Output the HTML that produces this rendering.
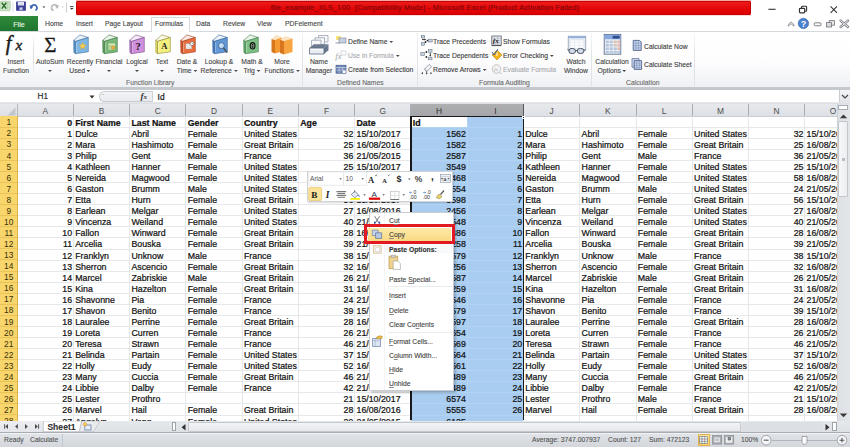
<!DOCTYPE html><html><head><meta charset="utf-8"><style>
*{margin:0;padding:0;box-sizing:border-box}
html,body{width:850px;height:447px;overflow:hidden;background:#fff;font-family:"Liberation Sans",sans-serif;}
.a{position:absolute}
.ui{position:absolute;font-size:6.8px;color:#454545;white-space:nowrap;line-height:1;-webkit-text-stroke:0.12px currentColor}
.c{position:absolute;font-size:8.8px;color:#111;white-space:nowrap;line-height:1;-webkit-text-stroke:0.22px #111}
.r{text-align:right}
.u2{font-size:7.2px;transform:scaleX(0.94);transform-origin:0 0}
.u2c{font-size:7.2px;transform:scaleX(0.94);transform-origin:50% 0}
.dd{display:inline-block;width:0;height:0;border-left:2px solid transparent;border-right:2px solid transparent;border-top:2.4px solid #4a4a4a;vertical-align:1px;margin-left:2px}
u{text-decoration-color:#8a8a8a;text-decoration-thickness:0.6px;text-underline-offset:0.8px}
.b{font-weight:bold}
.hl{position:absolute;left:17px;width:820px;height:1px;background:#e7e8ea}
.vl{position:absolute;top:116px;width:1px;background:#e6e7e9}
.ch{position:absolute;font-size:8.4px;color:#4a4a4a;text-align:center;line-height:1}
.rh{position:absolute;font-size:8.4px;color:#3a3208;text-align:center;line-height:1;width:17.5px;left:0}
</style></head><body>
<div class="a" style="left:0;top:0;width:850px;height:16px;background:#fff"></div>
<div class="a" style="left:75.5px;top:0;width:675.6px;height:15.6px;background:linear-gradient(#f7a0a0,#f5b0b0 6%,#fff0 8%,#fff0 92%,#fbd0d0 96%,#fff0)"></div>
<div class="a" style="left:75.8px;top:1px;width:675px;height:13.9px;background:linear-gradient(#ee1c1c,#e40808 50%,#dc0000);border:0.6px solid #c40000;border-radius:1px"></div>
<div class="ui" style="left:0;width:850px;top:4.4px;text-align:center;color:#7a0606;font-size:7.2px;letter-spacing:0.28px">file_example_XLS_100&nbsp; [Compatibility Mode] - Microsoft Excel (Product Activation Failed)</div>
<svg class="a" style="left:760px;top:0" width="90" height="32" viewBox="760 0 90 32"><path d="M768.4 9.3h7.2" stroke="#333" stroke-width="1.1"/><path d="M801.6 7.9 V6.9 a0.7 0.7 0 0 1 0.7 -0.7 h3.6 a0.7 0.7 0 0 1 0.7 0.7 v3.6 a0.7 0.7 0 0 1 -0.7 0.7 h-0.9" stroke="#333" stroke-width="1.1" fill="none"/><rect x="799.5" y="8.3" width="5.2" height="4.5" rx="0.8" fill="none" stroke="#333" stroke-width="1.2"/><path d="M830.6 6.4L837 12.8M837 6.4L830.6 12.8" stroke="#333" stroke-width="1.05"/><path d="M788.2 26.2 L788.2 24.6 L791.1 21.9 L794 24.6 L794 26.2 L791.1 23.8Z" fill="#f4f4f4" stroke="#7b7f85" stroke-width="0.8" stroke-linejoin="round"/><circle cx="803.4" cy="23.4" r="5.2" fill="#4a80cc" stroke="#2f5fa8" stroke-width="0.6"/><text x="803.4" y="26.7" font-size="9" font-weight="bold" fill="#fff" text-anchor="middle" font-family="Liberation Sans">?</text><rect x="814.2" y="22.8" width="6.8" height="3" rx="1" fill="#fafafa" stroke="#6f737a" stroke-width="0.9"/><rect x="829.2" y="20.6" width="5.2" height="4.6" fill="#e6e7e9" stroke="#6f737a" stroke-width="0.8"/><rect x="826.4" y="22.6" width="5" height="4.4" fill="#d8dadd" stroke="#6f737a" stroke-width="0.8"/><path d="M840.6 20.6 L848 27 M848 20.6 L840.6 27" stroke="#7b7f85" stroke-width="2.4" stroke-linecap="round"/><path d="M840.6 20.6 L848 27 M848 20.6 L840.6 27" stroke="#f4f4f4" stroke-width="1" stroke-linecap="round"/></svg>
<svg class="a" style="left:0;top:0" width="75" height="16"><rect x="0.3" y="1.2" width="10" height="9.6" rx="0.8" fill="#cfe8c8" stroke="#9fbf98" stroke-width="0.6"/><path d="M5 2.5h4.5M5 5h4.5M5 7.5h4.5M7.2 2v8" stroke="#a7c9a0" stroke-width="0.5"/><path d="M1.8 2.8L6.2 8.6M6.2 2.8L1.8 8.6" stroke="#2c6e2c" stroke-width="1.5"/><line x1="13" y1="2" x2="13" y2="12.5" stroke="#dcdcdc" stroke-width="0.8"/><rect x="16.1" y="1.4" width="9.8" height="9.4" rx="0.6" fill="#3a3f92"/><rect x="17.8" y="1.9" width="6.2" height="3.6" fill="#f0f2fa"/><path d="M18.3 3h5M18.3 4.3h5" stroke="#aab0d0" stroke-width="0.4"/><rect x="19" y="7.2" width="4" height="3.2" fill="#8b90c8"/><rect x="20.3" y="7.8" width="1.4" height="1.8" fill="#e8eaf6"/><path d="M31 8.5 A3 3 0 1 1 35.5 10.5" stroke="#3c64b4" stroke-width="1.6" fill="none"/><path d="M29.5 5.5 L31 9 L33.5 6.5Z" fill="#3c64b4"/><path d="M42.5 6.5l1.4 1.4 1.4-1.4z" fill="#333"/><path d="M53.5 10.5 A3 3 0 1 1 57.5 7.5" stroke="#b8b8b8" stroke-width="1.5" fill="none"/><path d="M59 5 L57.5 9 L55 6.5Z" fill="#b8b8b8"/><path d="M61.5 6.5l1.2 1.2 1.2-1.2z" fill="#bbb"/><line x1="66.5" y1="2.5" x2="66.5" y2="12.5" stroke="#cfcfcf"/><rect x="70" y="6.2" width="3.6" height="0.9" fill="#333"/><path d="M70 8l1.8 1.8 1.8-1.8z" fill="#333"/></svg>
<div class="a" style="left:0;top:16px;width:38.2px;height:15.5px;background:linear-gradient(#2f8a3a,#1e7430)"></div>
<div class="ui" style="left:0;width:38px;top:20.8px;text-align:center;color:#e9f5e6;font-size:7.2px">File</div>
<div class="a" style="left:0;top:31.2px;width:850px;height:1px;background:#d4d7db"></div>
<div class="a" style="left:150.5px;top:16.5px;width:39.8px;height:15.5px;background:#fff;border:1px solid #d4d7db;border-bottom:none"></div>
<div class="ui u2" style="left:44.8px;top:20.4px;color:#444">Home</div>
<div class="ui u2" style="left:75.6px;top:20.4px;color:#444">Insert</div>
<div class="ui u2" style="left:105.3px;top:20.4px;color:#444">Page Layout</div>
<div class="ui u2" style="left:154.8px;top:20.4px;color:#444">Formulas</div>
<div class="ui u2" style="left:196px;top:20.4px;color:#444">Data</div>
<div class="ui u2" style="left:223.1px;top:20.4px;color:#444">Review</div>
<div class="ui u2" style="left:257.4px;top:20.4px;color:#444">View</div>
<div class="ui u2" style="left:285px;top:20.4px;color:#444">PDFelement</div>
<div class="a" style="left:0;top:31.7px;width:850px;height:55.3px;background:linear-gradient(#ffffff 0%,#fdfdfe 55%,#eef0f3 100%)"></div>
<div class="a" style="left:32.7px;top:36px;width:1px;height:40px;background:linear-gradient(rgba(220,222,226,0),#dfe1e5 30%,#dfe1e5 70%,rgba(220,222,226,0))"></div>
<div class="a" style="left:301.8px;top:33px;width:1px;height:53px;background:linear-gradient(rgba(226,228,232,0.3),#e1e3e7 40%,#dfe2e6)"></div>
<div class="a" style="left:417.2px;top:33px;width:1px;height:53px;background:linear-gradient(rgba(226,228,232,0.3),#e1e3e7 40%,#dfe2e6)"></div>
<div class="a" style="left:591.3px;top:33px;width:1px;height:53px;background:linear-gradient(rgba(226,228,232,0.3),#e1e3e7 40%,#dfe2e6)"></div>
<div class="a" style="left:693.7px;top:33px;width:1px;height:53px;background:linear-gradient(rgba(226,228,232,0.3),#e1e3e7 40%,#dfe2e6)"></div>
<div class="a" style="left:0;top:86.9px;width:850px;height:3.2px;background:#c5c8cd"></div>
<div class="ui u2" style="left:125.9px;top:78.7px;color:#6b6b6b">Function Library</div>
<div class="ui u2" style="left:336.7px;top:78.7px;color:#6b6b6b">Defined Names</div>
<div class="ui u2" style="left:478.5px;top:78.7px;color:#6b6b6b">Formula Auditing</div>
<div class="ui u2" style="left:625.9px;top:78.7px;color:#6b6b6b">Calculation</div>
<div class="ui u2c" style="left:-23.7px;width:80px;top:58.2px;text-align:center">Insert</div>
<div class="ui u2c" style="left:-23.7px;width:80px;top:67.2px;text-align:center">Function</div>
<div class="ui u2c" style="left:10px;width:80px;top:58.2px;text-align:center">AutoSum</div>
<div class="a" style="left:48px;top:69.6px;width:0;height:0;border-left:2px solid transparent;border-right:2px solid transparent;border-top:2.4px solid #4a4a4a"></div>
<div class="ui u2c" style="left:39.7px;width:80px;top:58.2px;text-align:center">Recently</div>
<div class="ui u2c" style="left:39.7px;width:80px;top:67.2px;text-align:center">Used<span class="dd"></span></div>
<div class="ui u2c" style="left:69.4px;width:80px;top:58.2px;text-align:center">Financial</div>
<div class="a" style="left:107.4px;top:69.6px;width:0;height:0;border-left:2px solid transparent;border-right:2px solid transparent;border-top:2.4px solid #4a4a4a"></div>
<div class="ui u2c" style="left:96.5px;width:80px;top:58.2px;text-align:center">Logical</div>
<div class="a" style="left:134.5px;top:69.6px;width:0;height:0;border-left:2px solid transparent;border-right:2px solid transparent;border-top:2.4px solid #4a4a4a"></div>
<div class="ui u2c" style="left:121.5px;width:80px;top:58.2px;text-align:center">Text</div>
<div class="a" style="left:159.5px;top:69.6px;width:0;height:0;border-left:2px solid transparent;border-right:2px solid transparent;border-top:2.4px solid #4a4a4a"></div>
<div class="ui u2c" style="left:147.4px;width:80px;top:58.2px;text-align:center">Date &amp;</div>
<div class="ui u2c" style="left:147.4px;width:80px;top:67.2px;text-align:center">Time<span class="dd"></span></div>
<div class="ui u2c" style="left:179px;width:80px;top:58.2px;text-align:center">Lookup &amp;</div>
<div class="ui u2c" style="left:179px;width:80px;top:67.2px;text-align:center">Reference<span class="dd"></span></div>
<div class="ui u2c" style="left:211.5px;width:80px;top:58.2px;text-align:center">Math &amp;</div>
<div class="ui u2c" style="left:211.5px;width:80px;top:67.2px;text-align:center">Trig<span class="dd"></span></div>
<div class="ui u2c" style="left:241.8px;width:80px;top:58.2px;text-align:center">More</div>
<div class="ui u2c" style="left:241.8px;width:80px;top:67.2px;text-align:center">Functions<span class="dd"></span></div>
<div class="ui u2c" style="left:279px;width:80px;top:58.2px;text-align:center">Name</div>
<div class="ui u2c" style="left:279px;width:80px;top:67.2px;text-align:center">Manager</div>
<div class="ui u2c" style="left:536.2px;width:80px;top:58.2px;text-align:center">Watch</div>
<div class="ui u2c" style="left:536.2px;width:80px;top:67.2px;text-align:center">Window</div>
<div class="ui u2c" style="left:571.8px;width:80px;top:58.2px;text-align:center">Calculation</div>
<div class="ui u2c" style="left:571.8px;width:80px;top:67.2px;text-align:center">Options<span class="dd"></span></div>
<div class="ui u2" style="left:347.5px;top:37.5px;color:#3b3b3b">Define Name<span class="dd"></span></div>
<div class="ui u2" style="left:347.5px;top:51.699999999999996px;color:#a9abae">Use in Formula<span class="dd"></span></div>
<div class="ui u2" style="left:347.5px;top:66.0px;color:#3b3b3b">Create from Selection</div>
<div class="ui u2" style="left:433.2px;top:37.5px;color:#3b3b3b">Trace Precedents</div>
<div class="ui u2" style="left:433.2px;top:51.699999999999996px;color:#3b3b3b">Trace Dependents</div>
<div class="ui u2" style="left:433.2px;top:66.0px;color:#3b3b3b">Remove Arrows<span class="dd"></span></div>
<div class="ui u2" style="left:503px;top:37.5px;color:#3b3b3b">Show Formulas</div>
<div class="ui u2" style="left:503px;top:51.699999999999996px;color:#3b3b3b">Error Checking<span class="dd"></span></div>
<div class="ui u2" style="left:503px;top:66.0px;color:#a9abae">Evaluate Formula</div>
<div class="ui u2" style="left:643.8px;top:42.6px;color:#3b3b3b">Calculate Now</div>
<div class="ui u2" style="left:643.8px;top:60.6px;color:#3b3b3b">Calculate Sheet</div>
<svg class="a" style="left:0;top:30px" width="64" height="28" viewBox="0 30 64 28"><text x="5.8" y="50.4" font-size="20.5" font-style="italic" fill="#1a1a1a" font-family="Liberation Serif" stroke="#1a1a1a" stroke-width="0.45">f</text><text x="15.4" y="50.4" font-size="15" font-style="italic" fill="#1a1a1a" font-family="Liberation Serif" stroke="#1a1a1a" stroke-width="0.4">x</text><text x="44.2" y="51.6" font-size="21" fill="#1a1a1a" font-family="Liberation Serif" stroke="#1a1a1a" stroke-width="0.3">&#931;</text></svg>
<svg class="a" style="left:72.5px;top:34.3px" width="17" height="21" viewBox="0 0 17 21"><path d="M0.6 6.4 L6.9 0.9 L15.3 3.5 L2.5 7.4Z" fill="#eaf2fa" stroke="#3d6d9c" stroke-width="0.6" stroke-linejoin="round"/><path d="M0.6 6.4 L2.5 7.4 L2.5 19.7 L0.8 18.6Z" fill="#4f8cc6" stroke="#3d6d9c" stroke-width="0.4"/><path d="M2.5 7.4 L15.3 3.5 L15.3 17.8 L2.5 19.7Z" fill="#7db6e4" stroke="#3d6d9c" stroke-width="0.6" stroke-linejoin="round"/><path d="M3.6 8.2 V18.6" stroke="#ffffff" stroke-opacity="0.35" stroke-width="0.9"/><path d="M9.6 8.2l1.2 2.5 2.6.2-2 1.7.7 2.6-2.5-1.4-2.3 1.5.5-2.7-2-1.6 2.7-.3z" fill="#f6cd52" stroke="#c9962a" stroke-width="0.3"/></svg>
<svg class="a" style="left:101.5px;top:34.3px" width="17" height="21" viewBox="0 0 17 21"><path d="M0.6 6.4 L6.9 0.9 L15.3 3.5 L2.5 7.4Z" fill="#e6f3e6" stroke="#3f7040" stroke-width="0.6" stroke-linejoin="round"/><path d="M0.6 6.4 L2.5 7.4 L2.5 19.7 L0.8 18.6Z" fill="#5a9c5c" stroke="#3f7040" stroke-width="0.4"/><path d="M2.5 7.4 L15.3 3.5 L15.3 17.8 L2.5 19.7Z" fill="#79b97a" stroke="#3f7040" stroke-width="0.6" stroke-linejoin="round"/><path d="M3.6 8.2 V18.6" stroke="#ffffff" stroke-opacity="0.35" stroke-width="0.9"/><rect x="6" y="9" width="7.5" height="7" fill="#cfe8b8" stroke="#5a8c4a" stroke-width="0.4"/><path d="M6.5 12h3M6.5 14h2" stroke="#6a9a5a" stroke-width="0.6"/><circle cx="11.2" cy="13.6" r="1.9" fill="#e2b440" stroke="#9a7420" stroke-width="0.4"/></svg>
<svg class="a" style="left:128.5px;top:34.3px" width="17" height="21" viewBox="0 0 17 21"><path d="M0.6 6.4 L6.9 0.9 L15.3 3.5 L2.5 7.4Z" fill="#f5eaf8" stroke="#7a4a88" stroke-width="0.6" stroke-linejoin="round"/><path d="M0.6 6.4 L2.5 7.4 L2.5 19.7 L0.8 18.6Z" fill="#b070c0" stroke="#7a4a88" stroke-width="0.4"/><path d="M2.5 7.4 L15.3 3.5 L15.3 17.8 L2.5 19.7Z" fill="#cf8fdc" stroke="#7a4a88" stroke-width="0.6" stroke-linejoin="round"/><path d="M3.6 8.2 V18.6" stroke="#ffffff" stroke-opacity="0.35" stroke-width="0.9"/><text x="9.2" y="15.8" font-size="10.5" font-weight="bold" fill="#111" text-anchor="middle" font-family="Liberation Serif">?</text></svg>
<svg class="a" style="left:154.5px;top:34.3px" width="17" height="21" viewBox="0 0 17 21"><path d="M0.6 6.4 L6.9 0.9 L15.3 3.5 L2.5 7.4Z" fill="#fbfae6" stroke="#8f8a30" stroke-width="0.6" stroke-linejoin="round"/><path d="M0.6 6.4 L2.5 7.4 L2.5 19.7 L0.8 18.6Z" fill="#dcd35a" stroke="#8f8a30" stroke-width="0.4"/><path d="M2.5 7.4 L15.3 3.5 L15.3 17.8 L2.5 19.7Z" fill="#f4f07e" stroke="#8f8a30" stroke-width="0.6" stroke-linejoin="round"/><path d="M3.6 8.2 V18.6" stroke="#ffffff" stroke-opacity="0.35" stroke-width="0.9"/><text x="9.2" y="15.2" font-size="8.5" font-weight="bold" fill="#222" text-anchor="middle" font-family="Liberation Serif">A</text></svg>
<svg class="a" style="left:180.3px;top:34.3px" width="17" height="21" viewBox="0 0 17 21"><path d="M0.6 6.4 L6.9 0.9 L15.3 3.5 L2.5 7.4Z" fill="#fbe8e0" stroke="#9a3a18" stroke-width="0.6" stroke-linejoin="round"/><path d="M0.6 6.4 L2.5 7.4 L2.5 19.7 L0.8 18.6Z" fill="#d0542a" stroke="#9a3a18" stroke-width="0.4"/><path d="M2.5 7.4 L15.3 3.5 L15.3 17.8 L2.5 19.7Z" fill="#ec6c3c" stroke="#9a3a18" stroke-width="0.6" stroke-linejoin="round"/><path d="M3.6 8.2 V18.6" stroke="#ffffff" stroke-opacity="0.35" stroke-width="0.9"/><rect x="5.8" y="9.6" width="6" height="5.4" fill="#e8e8e8" stroke="#999" stroke-width="0.3"/><circle cx="12" cy="9.6" r="2" fill="#fff" stroke="#444" stroke-width="0.5"/><path d="M12 8.6v1h0.8" stroke="#444" stroke-width="0.4" fill="none"/></svg>
<svg class="a" style="left:211.5px;top:34.3px" width="17" height="21" viewBox="0 0 17 21"><path d="M0.6 6.4 L6.9 0.9 L15.3 3.5 L2.5 7.4Z" fill="#e8f0fa" stroke="#2f5a90" stroke-width="0.6" stroke-linejoin="round"/><path d="M0.6 6.4 L2.5 7.4 L2.5 19.7 L0.8 18.6Z" fill="#467cc0" stroke="#2f5a90" stroke-width="0.4"/><path d="M2.5 7.4 L15.3 3.5 L15.3 17.8 L2.5 19.7Z" fill="#6298d6" stroke="#2f5a90" stroke-width="0.6" stroke-linejoin="round"/><path d="M3.6 8.2 V18.6" stroke="#ffffff" stroke-opacity="0.35" stroke-width="0.9"/><circle cx="9.4" cy="11.6" r="3" fill="#c4dcf4" stroke="#2a4f80" stroke-width="0.7"/><path d="M11.4 14l3.8 4.6" stroke="#4a4a4a" stroke-width="1.2"/></svg>
<svg class="a" style="left:243.2px;top:34.3px" width="17" height="21" viewBox="0 0 17 21"><path d="M0.6 6.4 L6.9 0.9 L15.3 3.5 L2.5 7.4Z" fill="#e8f5ea" stroke="#3f7a46" stroke-width="0.6" stroke-linejoin="round"/><path d="M0.6 6.4 L2.5 7.4 L2.5 19.7 L0.8 18.6Z" fill="#5ca465" stroke="#3f7a46" stroke-width="0.4"/><path d="M2.5 7.4 L15.3 3.5 L15.3 17.8 L2.5 19.7Z" fill="#7cc083" stroke="#3f7a46" stroke-width="0.6" stroke-linejoin="round"/><path d="M3.6 8.2 V18.6" stroke="#ffffff" stroke-opacity="0.35" stroke-width="0.9"/><ellipse cx="9.6" cy="11.8" rx="3" ry="3.8" fill="#111"/><ellipse cx="9.6" cy="11.8" rx="1.4" ry="2.4" fill="none" stroke="#b8e2bc" stroke-width="0.6"/><path d="M8.2 11.8h2.8" stroke="#b8e2bc" stroke-width="0.6"/></svg>
<svg class="a" style="left:271px;top:34.3px" width="22" height="21" viewBox="0 0 22 21"><path d="M0.5 5 L5 1 L11 3 L6 6Z" fill="#fbe3c4"/><path d="M0.5 5 L4 6 L4 19.5 L0.5 18Z" fill="#d8761e"/><path d="M4 6 L11 3.5 L11 17.5 L4 19.5Z" fill="#f59a32"/><path d="M9 6 L14 2 L21.5 4 L14 7Z" fill="#fbe3c4"/><path d="M9 6 L13 7 L13 20.5 L9 19Z" fill="#d8761e"/><path d="M13 7 L21.5 4.5 L21.5 18 L13 20.5Z" fill="#f7a540"/></svg>
<svg class="a" style="left:305px;top:32px" width="30" height="25" viewBox="305 32 30 25"><path d="M318.5 35.5h9.5v6.5h-9.5z" fill="#f7f8fa" stroke="#8c96a3" stroke-width="0.7"/><path d="M315 37.8h9.5v6.5H315z" fill="#f7f8fa" stroke="#8c96a3" stroke-width="0.7"/><path d="M311.5 40.2h9.5v6.5h-9.5z" fill="#f7f8fa" stroke="#8c96a3" stroke-width="0.7"/><path d="M309.5 48 L313.8 44.2 L328.5 44.2 L324 48Z" fill="#6c7b8f"/><path d="M324 48 L328.5 44.2 L328.5 50.2 L324 54Z" fill="#66768c"/><path d="M309.5 48 H324 V54 H309.5Z" fill="#e9eef5" stroke="#5d6b7e" stroke-width="0.8"/><path d="M311 49.5h11.5" stroke="#ffffff" stroke-width="0.8"/></svg>
<svg class="a" style="left:335px;top:35px" width="12" height="40" viewBox="0 0 12 40"><rect x="1" y="1" width="5" height="4" fill="#f4e27a"/><rect x="4" y="3" width="7" height="5" fill="#c7cfe0" stroke="#68758c" stroke-width="0.5"/><path d="M0.5 8h4" stroke="#68758c" stroke-width="0.7"/><text x="0.3" y="24.2" font-size="8.5" font-style="italic" fill="#9fa3a8" font-family="Liberation Serif">fx</text><rect x="6" y="16" width="5" height="4" fill="none" stroke="#c0c4ca" stroke-width="0.6"/><rect x="1" y="30.2" width="10" height="8" fill="#6f88b6" stroke="#3d5588" stroke-width="0.6"/><path d="M1.3 32.6h9.4" stroke="#dfe6f2" stroke-width="0.7"/><path d="M1.3 35.2h9.4M4.3 32.6v5.4M7.6 32.6v5.4" stroke="#c9d4e8" stroke-width="0.6"/><rect x="8" y="35.6" width="2.6" height="2.4" fill="#fff"/></svg>
<svg class="a" style="left:417px;top:33px" width="17" height="44" viewBox="417 33 17 44"><rect x="421.3" y="35.4" width="3.4" height="2.6" fill="#c8d2e0" stroke="#6d7a8c" stroke-width="0.6"/><rect x="421.3" y="42.6" width="3.4" height="2.6" fill="#c8d2e0" stroke="#6d7a8c" stroke-width="0.6"/><rect x="428.6" y="39.2" width="3.6" height="2.8" fill="#c8d2e0" stroke="#6d7a8c" stroke-width="0.6"/><path d="M422 39.6h3.2" stroke="#222" stroke-width="0.9"/><path d="M424.6 38.6l1.4 1-1.4 1z" fill="#222"/><circle cx="425.6" cy="42" r="0.9" fill="#222"/><circle cx="427.4" cy="40.6" r="0.8" fill="#222"/><rect x="420.8" y="52.6" width="3.6" height="2.8" fill="#c8d2e0" stroke="#6d7a8c" stroke-width="0.6"/><rect x="428.6" y="49.6" width="3.4" height="2.6" fill="#c8d2e0" stroke="#6d7a8c" stroke-width="0.6"/><rect x="428.6" y="57.2" width="3.4" height="2.6" fill="#c8d2e0" stroke="#6d7a8c" stroke-width="0.6"/><circle cx="426.4" cy="52" r="0.9" fill="#222"/><circle cx="426.4" cy="57" r="0.9" fill="#222"/><path d="M430.3 53v2.6" stroke="#222" stroke-width="0.9"/><path d="M429.2 55.2h2.2l-1.1 1.4z" fill="#222"/><path d="M424.5 69.2 L429.2 64.4 L431.6 66.6 L426.9 71.4Z" fill="#f3f4f6" stroke="#7a828c" stroke-width="0.7"/><path d="M424.5 69.2 L426.9 71.4" stroke="#7a828c" stroke-width="0.7"/><path d="M421.2 73.2l1.8 -1.1v2.2z" fill="#333"/><path d="M432.2 73.2l-1.8 -1.1v2.2z" fill="#333"/><path d="M426.7 71.4v2.4" stroke="#333" stroke-width="0.8"/><path d="M425.7 73.2h2l-1 1.2z" fill="#333"/></svg>
<svg class="a" style="left:490.5px;top:35px" width="12" height="42" viewBox="0 0 12 42"><rect x="0.8" y="1" width="9.4" height="9.2" fill="#e9ecf1" stroke="#4a4f58" stroke-width="0.7"/><path d="M0.8 3.4h9.4M0.8 5.8h9.4M0.8 8.2h9.4M3.4 1v9.2M6.8 1v9.2" stroke="#9aa2ae" stroke-width="0.5"/><text x="1.8" y="8.2" font-size="7" font-weight="bold" font-style="italic" fill="#111" font-family="Liberation Serif">fx</text><path d="M0.8 10.6h9.4" stroke="#333" stroke-width="0.8"/><path d="M6 15l5 5-5 5-5-5z" fill="#f2b418" stroke="#b07a08" stroke-width="0.5"/><path d="M6 17.5v3.5" stroke="#fff" stroke-width="1"/><path d="M1 17l2 3 4-6" stroke="#3a5a9c" stroke-width="1" fill="none"/><circle cx="5.5" cy="34" r="4.3" fill="#f1f1f1" stroke="#bbb" stroke-width="0.8"/><text x="3" y="36" font-size="5" font-style="italic" fill="#aaa" font-family="Liberation Serif">fx</text><path d="M8.5 37l2 2" stroke="#bbb" stroke-width="1"/></svg>
<svg class="a" style="left:566px;top:35px" width="22" height="21" viewBox="566 35 22 21"><rect x="568.2" y="36.2" width="17.6" height="14.2" fill="#f2f4f8" stroke="#7f8fa6" stroke-width="0.7"/><rect x="568.4" y="36.4" width="17.2" height="1.8" fill="#8eaedc"/><path d="M569.8 39.8h14.2v8.6h-14.2z" fill="#fbfcfd" stroke="#c3ccd8" stroke-width="0.5"/><path d="M569.8 42.6h14.2M569.8 45.4h14.2M574.5 39.8v8.6M579.2 39.8v8.6" stroke="#dfe4eb" stroke-width="0.5"/><ellipse cx="572.2" cy="51" rx="3.4" ry="2.6" fill="#d3dce8" stroke="#4b5566" stroke-width="1"/><ellipse cx="580.6" cy="51" rx="3.4" ry="2.6" fill="#d3dce8" stroke="#4b5566" stroke-width="1"/><path d="M575.6 50.6h1.6M568.8 50.4l-1.4 -1.2M584 50.4l1.4 -1.2" stroke="#4b5566" stroke-width="0.9"/></svg>
<svg class="a" style="left:602px;top:33px" width="21" height="23" viewBox="602 33 21 23"><rect x="604.2" y="34.4" width="16.6" height="19.8" fill="#eef2f8" stroke="#5f7090" stroke-width="0.9"/><rect x="604.7" y="34.9" width="15.6" height="4.4" fill="#86a8dc"/><rect x="612.6" y="35.8" width="7" height="2.8" fill="#2f4f92"/><g fill="#b6c6dc"><rect x="605.6" y="40.6" width="3.2" height="2.6"/><rect x="609.6" y="40.6" width="3.2" height="2.6"/><rect x="613.6" y="40.6" width="3.2" height="2.6" fill="#d9c4b6"/><rect x="617.4" y="40.6" width="2.8" height="2.6" fill="#e3b8b0"/><rect x="605.6" y="44" width="3.2" height="2.6"/><rect x="609.6" y="44" width="3.2" height="2.6"/><rect x="613.6" y="44" width="3.2" height="2.6" fill="#d9c4b6"/><rect x="617.4" y="44" width="2.8" height="2.6" fill="#e3b8b0"/><rect x="605.6" y="47.4" width="3.2" height="2.6"/><rect x="609.6" y="47.4" width="3.2" height="2.6"/><rect x="613.6" y="47.4" width="3.2" height="2.6"/><rect x="617.4" y="47.4" width="2.8" height="2.6" fill="#e3b8b0"/><rect x="605.6" y="50.8" width="3.2" height="2.4"/><rect x="609.6" y="50.8" width="3.2" height="2.4"/><rect x="613.6" y="50.8" width="3.2" height="2.4"/><rect x="617.4" y="50.8" width="2.8" height="2.4"/></g></svg>
<svg class="a" style="left:631px;top:38px" width="13" height="33" viewBox="631 38 13 33"><path d="M633.2 40.4h6.4l1.6 1.6v8.4h-8z" fill="#c9d5ea" stroke="#3f5486" stroke-width="0.8"/><path d="M633.2 43.2h8M633.2 45.6h8M633.2 48h8M635.8 41v9.4M638.4 41v9.4" stroke="#6f84b2" stroke-width="0.5"/><path d="M632 58.6h7v8.6h-7z" fill="#d4ddee" stroke="#4a5f90" stroke-width="0.7"/><path d="M634.2 60.6h7.4v8.8h-7.4z" fill="#c9d5ea" stroke="#3f5486" stroke-width="0.8"/><path d="M634.2 63h7.4M634.2 65.3h7.4M634.2 67.6h7.4M636.7 60.6v8.8M639.2 60.6v8.8" stroke="#6f84b2" stroke-width="0.5"/></svg>
<div class="a" style="left:0;top:90.1px;width:850px;height:12.4px;background:#fff"></div>
<div class="a" style="left:0;top:102px;width:850px;height:2.3px;background:linear-gradient(#e8eaed,#d9dce0)"></div>
<div class="ui" style="left:37.6px;top:93px;font-size:8.2px;color:#222">H1</div>
<svg class="a" style="left:89px;top:94.5px" width="6" height="4"><path d="M0.5 0.5h5l-2.5 3z" fill="#333"/></svg>
<div class="a" style="left:98.8px;top:90.8px;width:53px;height:11px;border:1px solid #c9ccd1;border-right:none;border-radius:6px 0 0 6px;background:linear-gradient(#f2f3f5,#e9ebee)"></div>
<div class="a" style="left:101.5px;top:92px;font-size:5px;color:#aaa;line-height:1">~</div>
<div class="a" style="left:140.5px;top:92px;font-family:'Liberation Serif',serif;font-style:italic;font-weight:bold;font-size:9px;color:#333;line-height:1">f<span style="font-size:7px">x</span></div>
<div class="a" style="left:151.8px;top:90.8px;width:1px;height:11px;background:#d0d3d8"></div>
<div class="c" style="left:157.6px;top:93.3px;font-size:8.4px;color:#222">Id</div>
<div class="a" style="left:838.8px;top:90.3px;width:11.2px;height:12.2px;background:linear-gradient(#f4f5f7,#e2e4e8);border-left:1px solid #c9ccd1"></div>
<svg class="a" style="left:840.5px;top:94px" width="8" height="5"><path d="M1 1l3 3 3-3" stroke="#444" stroke-width="1.2" fill="none"/></svg>
<div class="a" style="left:0;top:104.2px;width:837px;height:12px;background:linear-gradient(#e7e9ed,#dde0e5)"></div>
<div class="a" style="left:0;top:104.2px;width:17.7px;height:12px;background:linear-gradient(#e7e9ed,#dde0e5);border-right:1px solid #b5b9bf"></div>
<svg class="a" style="left:7px;top:106.5px" width="9" height="9"><path d="M8.5 0.5V8.5H0.5Z" fill="#c3c7cc"/></svg>
<div class="a" style="left:72.9px;top:104.2px;width:1px;height:12px;background:#a9adb3"></div>
<div class="ch" style="left:17.14px;top:106.5px;width:56.26px;color:#4d4d4d">A</div>
<div class="a" style="left:129.16px;top:104.2px;width:1px;height:12px;background:#a9adb3"></div>
<div class="ch" style="left:73.4px;top:106.5px;width:56.26px;color:#4d4d4d">B</div>
<div class="a" style="left:185.42px;top:104.2px;width:1px;height:12px;background:#a9adb3"></div>
<div class="ch" style="left:129.66px;top:106.5px;width:56.26px;color:#4d4d4d">C</div>
<div class="a" style="left:241.68px;top:104.2px;width:1px;height:12px;background:#a9adb3"></div>
<div class="ch" style="left:185.92000000000002px;top:106.5px;width:56.26px;color:#4d4d4d">D</div>
<div class="a" style="left:297.94px;top:104.2px;width:1px;height:12px;background:#a9adb3"></div>
<div class="ch" style="left:242.18px;top:106.5px;width:56.26px;color:#4d4d4d">E</div>
<div class="a" style="left:354.2px;top:104.2px;width:1px;height:12px;background:#a9adb3"></div>
<div class="ch" style="left:298.44px;top:106.5px;width:56.26px;color:#4d4d4d">F</div>
<div class="a" style="left:410.46px;top:104.2px;width:1px;height:12px;background:#a9adb3"></div>
<div class="ch" style="left:354.7px;top:106.5px;width:56.26px;color:#4d4d4d">G</div>
<div class="a" style="left:410.96px;top:104.2px;width:56.26px;height:12px;background:linear-gradient(#aeafb1,#a4a6a9)"></div>
<div class="a" style="left:466.71999999999997px;top:104.2px;width:1px;height:12px;background:#55585c"></div>
<div class="ch" style="left:410.96px;top:106.5px;width:56.26px;color:#303030">H</div>
<div class="a" style="left:467.21999999999997px;top:104.2px;width:56.26px;height:12px;background:linear-gradient(#aeafb1,#a4a6a9)"></div>
<div class="a" style="left:522.98px;top:104.2px;width:1px;height:12px;background:#55585c"></div>
<div class="ch" style="left:467.21999999999997px;top:106.5px;width:56.26px;color:#303030">I</div>
<div class="a" style="left:579.24px;top:104.2px;width:1px;height:12px;background:#a9adb3"></div>
<div class="ch" style="left:523.48px;top:106.5px;width:56.26px;color:#4d4d4d">J</div>
<div class="a" style="left:635.5px;top:104.2px;width:1px;height:12px;background:#a9adb3"></div>
<div class="ch" style="left:579.74px;top:106.5px;width:56.26px;color:#4d4d4d">K</div>
<div class="a" style="left:691.76px;top:104.2px;width:1px;height:12px;background:#a9adb3"></div>
<div class="ch" style="left:636.0px;top:106.5px;width:56.26px;color:#4d4d4d">L</div>
<div class="a" style="left:748.02px;top:104.2px;width:1px;height:12px;background:#a9adb3"></div>
<div class="ch" style="left:692.26px;top:106.5px;width:56.26px;color:#4d4d4d">M</div>
<div class="a" style="left:804.28px;top:104.2px;width:1px;height:12px;background:#a9adb3"></div>
<div class="ch" style="left:748.52px;top:106.5px;width:56.26px;color:#4d4d4d">N</div>
<div class="a" style="left:860.54px;top:104.2px;width:1px;height:12px;background:#a9adb3"></div>
<div class="ch" style="left:804.78px;top:106.5px;width:56.26px;color:#4d4d4d">O</div>
<div class="a" style="left:17.14px;top:115.7px;width:820px;height:0.8px;background:#c9ccd1"></div>
<div class="hl" style="top:126.77px"></div>
<div class="hl" style="top:137.83px"></div>
<div class="hl" style="top:148.90px"></div>
<div class="hl" style="top:159.97px"></div>
<div class="hl" style="top:171.03px"></div>
<div class="hl" style="top:182.10px"></div>
<div class="hl" style="top:193.17px"></div>
<div class="hl" style="top:204.24px"></div>
<div class="hl" style="top:215.30px"></div>
<div class="hl" style="top:226.37px"></div>
<div class="hl" style="top:237.44px"></div>
<div class="hl" style="top:248.50px"></div>
<div class="hl" style="top:259.57px"></div>
<div class="hl" style="top:270.64px"></div>
<div class="hl" style="top:281.70px"></div>
<div class="hl" style="top:292.77px"></div>
<div class="hl" style="top:303.84px"></div>
<div class="hl" style="top:314.91px"></div>
<div class="hl" style="top:325.97px"></div>
<div class="hl" style="top:337.04px"></div>
<div class="hl" style="top:348.11px"></div>
<div class="hl" style="top:359.17px"></div>
<div class="hl" style="top:370.24px"></div>
<div class="hl" style="top:381.31px"></div>
<div class="hl" style="top:392.38px"></div>
<div class="hl" style="top:403.44px"></div>
<div class="hl" style="top:414.51px"></div>
<div class="vl" style="left:72.90px;height:304.6px"></div>
<div class="vl" style="left:129.16px;height:304.6px"></div>
<div class="vl" style="left:185.42px;height:304.6px"></div>
<div class="vl" style="left:241.68px;height:304.6px"></div>
<div class="vl" style="left:297.94px;height:304.6px"></div>
<div class="vl" style="left:354.20px;height:304.6px"></div>
<div class="vl" style="left:410.46px;height:304.6px"></div>
<div class="vl" style="left:466.72px;height:304.6px"></div>
<div class="vl" style="left:522.98px;height:304.6px"></div>
<div class="vl" style="left:579.24px;height:304.6px"></div>
<div class="vl" style="left:635.50px;height:304.6px"></div>
<div class="vl" style="left:691.76px;height:304.6px"></div>
<div class="vl" style="left:748.02px;height:304.6px"></div>
<div class="vl" style="left:804.28px;height:304.6px"></div>
<div class="a" style="left:410.96px;top:116.2px;width:112.52px;height:304.6px;background:#a8cdf1"></div>
<div class="a" style="left:410.96px;top:126.77px;width:112.52px;height:1px;background:#b2d3f2"></div>
<div class="a" style="left:410.96px;top:137.83px;width:112.52px;height:1px;background:#b2d3f2"></div>
<div class="a" style="left:410.96px;top:148.90px;width:112.52px;height:1px;background:#b2d3f2"></div>
<div class="a" style="left:410.96px;top:159.97px;width:112.52px;height:1px;background:#b2d3f2"></div>
<div class="a" style="left:410.96px;top:171.03px;width:112.52px;height:1px;background:#b2d3f2"></div>
<div class="a" style="left:410.96px;top:182.10px;width:112.52px;height:1px;background:#b2d3f2"></div>
<div class="a" style="left:410.96px;top:193.17px;width:112.52px;height:1px;background:#b2d3f2"></div>
<div class="a" style="left:410.96px;top:204.24px;width:112.52px;height:1px;background:#b2d3f2"></div>
<div class="a" style="left:410.96px;top:215.30px;width:112.52px;height:1px;background:#b2d3f2"></div>
<div class="a" style="left:410.96px;top:226.37px;width:112.52px;height:1px;background:#b2d3f2"></div>
<div class="a" style="left:410.96px;top:237.44px;width:112.52px;height:1px;background:#b2d3f2"></div>
<div class="a" style="left:410.96px;top:248.50px;width:112.52px;height:1px;background:#b2d3f2"></div>
<div class="a" style="left:410.96px;top:259.57px;width:112.52px;height:1px;background:#b2d3f2"></div>
<div class="a" style="left:410.96px;top:270.64px;width:112.52px;height:1px;background:#b2d3f2"></div>
<div class="a" style="left:410.96px;top:281.70px;width:112.52px;height:1px;background:#b2d3f2"></div>
<div class="a" style="left:410.96px;top:292.77px;width:112.52px;height:1px;background:#b2d3f2"></div>
<div class="a" style="left:410.96px;top:303.84px;width:112.52px;height:1px;background:#b2d3f2"></div>
<div class="a" style="left:410.96px;top:314.91px;width:112.52px;height:1px;background:#b2d3f2"></div>
<div class="a" style="left:410.96px;top:325.97px;width:112.52px;height:1px;background:#b2d3f2"></div>
<div class="a" style="left:410.96px;top:337.04px;width:112.52px;height:1px;background:#b2d3f2"></div>
<div class="a" style="left:410.96px;top:348.11px;width:112.52px;height:1px;background:#b2d3f2"></div>
<div class="a" style="left:410.96px;top:359.17px;width:112.52px;height:1px;background:#b2d3f2"></div>
<div class="a" style="left:410.96px;top:370.24px;width:112.52px;height:1px;background:#b2d3f2"></div>
<div class="a" style="left:410.96px;top:381.31px;width:112.52px;height:1px;background:#b2d3f2"></div>
<div class="a" style="left:410.96px;top:392.38px;width:112.52px;height:1px;background:#b2d3f2"></div>
<div class="a" style="left:410.96px;top:403.44px;width:112.52px;height:1px;background:#b2d3f2"></div>
<div class="a" style="left:410.96px;top:414.51px;width:112.52px;height:1px;background:#b2d3f2"></div>
<div class="a" style="left:466.72px;top:116.2px;width:1px;height:304.6px;background:#b2d3f2"></div>
<div class="a" style="left:412.35999999999996px;top:117.0px;width:54.86px;height:10.467px;background:#fff"></div>
<div class="a" style="left:0;top:116.2px;width:17.7px;height:304.6px;background:#f8d66c;border-right:1px solid #dcb04a"></div>
<div class="a" style="left:0;top:126.67px;width:17px;height:0.8px;background:#e9c25a"></div>
<div class="rh" style="top:118.30px">1</div>
<div class="a" style="left:0;top:137.73px;width:17px;height:0.8px;background:#e9c25a"></div>
<div class="rh" style="top:129.37px">2</div>
<div class="a" style="left:0;top:148.80px;width:17px;height:0.8px;background:#e9c25a"></div>
<div class="rh" style="top:140.43px">3</div>
<div class="a" style="left:0;top:159.87px;width:17px;height:0.8px;background:#e9c25a"></div>
<div class="rh" style="top:151.50px">4</div>
<div class="a" style="left:0;top:170.94px;width:17px;height:0.8px;background:#e9c25a"></div>
<div class="rh" style="top:162.57px">5</div>
<div class="a" style="left:0;top:182.00px;width:17px;height:0.8px;background:#e9c25a"></div>
<div class="rh" style="top:173.63px">6</div>
<div class="a" style="left:0;top:193.07px;width:17px;height:0.8px;background:#e9c25a"></div>
<div class="rh" style="top:184.70px">7</div>
<div class="a" style="left:0;top:204.14px;width:17px;height:0.8px;background:#e9c25a"></div>
<div class="rh" style="top:195.77px">8</div>
<div class="a" style="left:0;top:215.20px;width:17px;height:0.8px;background:#e9c25a"></div>
<div class="rh" style="top:206.84px">9</div>
<div class="a" style="left:0;top:226.27px;width:17px;height:0.8px;background:#e9c25a"></div>
<div class="rh" style="top:217.90px">10</div>
<div class="a" style="left:0;top:237.34px;width:17px;height:0.8px;background:#e9c25a"></div>
<div class="rh" style="top:228.97px">11</div>
<div class="a" style="left:0;top:248.40px;width:17px;height:0.8px;background:#e9c25a"></div>
<div class="rh" style="top:240.04px">12</div>
<div class="a" style="left:0;top:259.47px;width:17px;height:0.8px;background:#e9c25a"></div>
<div class="rh" style="top:251.10px">13</div>
<div class="a" style="left:0;top:270.54px;width:17px;height:0.8px;background:#e9c25a"></div>
<div class="rh" style="top:262.17px">14</div>
<div class="a" style="left:0;top:281.60px;width:17px;height:0.8px;background:#e9c25a"></div>
<div class="rh" style="top:273.24px">15</div>
<div class="a" style="left:0;top:292.67px;width:17px;height:0.8px;background:#e9c25a"></div>
<div class="rh" style="top:284.31px">16</div>
<div class="a" style="left:0;top:303.74px;width:17px;height:0.8px;background:#e9c25a"></div>
<div class="rh" style="top:295.37px">17</div>
<div class="a" style="left:0;top:314.81px;width:17px;height:0.8px;background:#e9c25a"></div>
<div class="rh" style="top:306.44px">18</div>
<div class="a" style="left:0;top:325.87px;width:17px;height:0.8px;background:#e9c25a"></div>
<div class="rh" style="top:317.51px">19</div>
<div class="a" style="left:0;top:336.94px;width:17px;height:0.8px;background:#e9c25a"></div>
<div class="rh" style="top:328.57px">20</div>
<div class="a" style="left:0;top:348.01px;width:17px;height:0.8px;background:#e9c25a"></div>
<div class="rh" style="top:339.64px">21</div>
<div class="a" style="left:0;top:359.07px;width:17px;height:0.8px;background:#e9c25a"></div>
<div class="rh" style="top:350.71px">22</div>
<div class="a" style="left:0;top:370.14px;width:17px;height:0.8px;background:#e9c25a"></div>
<div class="rh" style="top:361.77px">23</div>
<div class="a" style="left:0;top:381.21px;width:17px;height:0.8px;background:#e9c25a"></div>
<div class="rh" style="top:372.84px">24</div>
<div class="a" style="left:0;top:392.27px;width:17px;height:0.8px;background:#e9c25a"></div>
<div class="rh" style="top:383.91px">25</div>
<div class="a" style="left:0;top:403.34px;width:17px;height:0.8px;background:#e9c25a"></div>
<div class="rh" style="top:394.98px">26</div>
<div class="a" style="left:0;top:414.41px;width:17px;height:0.8px;background:#e9c25a"></div>
<div class="rh" style="top:406.04px">27</div>
<div class="a" style="left:0;top:425.48px;width:17px;height:0.8px;background:#e9c25a"></div>
<div class="rh" style="top:417.11px">28</div>
<div class="c r b" style="left:17.14px;width:54.96px;top:118.70px">0</div>
<div class="c b" style="left:75.2px;top:118.70px">First Name</div>
<div class="c b" style="left:131.46px;top:118.70px">Last Name</div>
<div class="c b" style="left:187.72000000000003px;top:118.70px">Gender</div>
<div class="c b" style="left:243.98000000000002px;top:118.70px">Country</div>
<div class="c b" style="left:300.24px;top:118.70px">Age</div>
<div class="c b" style="left:356.5px;top:118.70px">Date</div>
<div class="c b" style="left:412.76px;top:118.70px">Id</div>
<div class="c r" style="left:17.14px;width:54.96px;top:129.77px">1</div>
<div class="c" style="left:75.2px;top:129.77px">Dulce</div>
<div class="c" style="left:131.46px;top:129.77px">Abril</div>
<div class="c" style="left:187.72000000000003px;top:129.77px">Female</div>
<div class="c" style="left:243.98000000000002px;top:129.77px">United States</div>
<div class="c r" style="left:298.44px;width:54.96px;top:129.77px">32</div>
<div class="c" style="left:356.5px;top:129.77px">15/10/2017</div>
<div class="c r" style="left:410.96px;width:54.96px;top:129.77px">1562</div>
<div class="c r" style="left:467.21999999999997px;width:54.96px;top:129.77px">1</div>
<div class="c" style="left:525.28px;top:129.77px">Dulce</div>
<div class="c" style="left:581.54px;top:129.77px">Abril</div>
<div class="c" style="left:637.8px;top:129.77px">Female</div>
<div class="c" style="left:694.06px;top:129.77px">United States</div>
<div class="c r" style="left:748.52px;width:54.96px;top:129.77px">32</div>
<div class="c" style="left:806.5799999999999px;top:129.77px">15/10/2017</div>
<div class="c r" style="left:17.14px;width:54.96px;top:140.83px">2</div>
<div class="c" style="left:75.2px;top:140.83px">Mara</div>
<div class="c" style="left:131.46px;top:140.83px">Hashimoto</div>
<div class="c" style="left:187.72000000000003px;top:140.83px">Female</div>
<div class="c" style="left:243.98000000000002px;top:140.83px">Great Britain</div>
<div class="c r" style="left:298.44px;width:54.96px;top:140.83px">25</div>
<div class="c" style="left:356.5px;top:140.83px">16/08/2016</div>
<div class="c r" style="left:410.96px;width:54.96px;top:140.83px">1582</div>
<div class="c r" style="left:467.21999999999997px;width:54.96px;top:140.83px">2</div>
<div class="c" style="left:525.28px;top:140.83px">Mara</div>
<div class="c" style="left:581.54px;top:140.83px">Hashimoto</div>
<div class="c" style="left:637.8px;top:140.83px">Female</div>
<div class="c" style="left:694.06px;top:140.83px">Great Britain</div>
<div class="c r" style="left:748.52px;width:54.96px;top:140.83px">25</div>
<div class="c" style="left:806.5799999999999px;top:140.83px">16/08/2016</div>
<div class="c r" style="left:17.14px;width:54.96px;top:151.90px">3</div>
<div class="c" style="left:75.2px;top:151.90px">Philip</div>
<div class="c" style="left:131.46px;top:151.90px">Gent</div>
<div class="c" style="left:187.72000000000003px;top:151.90px">Male</div>
<div class="c" style="left:243.98000000000002px;top:151.90px">France</div>
<div class="c r" style="left:298.44px;width:54.96px;top:151.90px">36</div>
<div class="c" style="left:356.5px;top:151.90px">21/05/2015</div>
<div class="c r" style="left:410.96px;width:54.96px;top:151.90px">2587</div>
<div class="c r" style="left:467.21999999999997px;width:54.96px;top:151.90px">3</div>
<div class="c" style="left:525.28px;top:151.90px">Philip</div>
<div class="c" style="left:581.54px;top:151.90px">Gent</div>
<div class="c" style="left:637.8px;top:151.90px">Male</div>
<div class="c" style="left:694.06px;top:151.90px">France</div>
<div class="c r" style="left:748.52px;width:54.96px;top:151.90px">36</div>
<div class="c" style="left:806.5799999999999px;top:151.90px">21/05/2015</div>
<div class="c r" style="left:17.14px;width:54.96px;top:162.97px">4</div>
<div class="c" style="left:75.2px;top:162.97px">Kathleen</div>
<div class="c" style="left:131.46px;top:162.97px">Hanner</div>
<div class="c" style="left:187.72000000000003px;top:162.97px">Female</div>
<div class="c" style="left:243.98000000000002px;top:162.97px">United States</div>
<div class="c r" style="left:298.44px;width:54.96px;top:162.97px">25</div>
<div class="c" style="left:356.5px;top:162.97px">15/10/2017</div>
<div class="c r" style="left:410.96px;width:54.96px;top:162.97px">3549</div>
<div class="c r" style="left:467.21999999999997px;width:54.96px;top:162.97px">4</div>
<div class="c" style="left:525.28px;top:162.97px">Kathleen</div>
<div class="c" style="left:581.54px;top:162.97px">Hanner</div>
<div class="c" style="left:637.8px;top:162.97px">Female</div>
<div class="c" style="left:694.06px;top:162.97px">United States</div>
<div class="c r" style="left:748.52px;width:54.96px;top:162.97px">25</div>
<div class="c" style="left:806.5799999999999px;top:162.97px">15/10/2017</div>
<div class="c r" style="left:17.14px;width:54.96px;top:174.03px">5</div>
<div class="c" style="left:75.2px;top:174.03px">Nereida</div>
<div class="c" style="left:131.46px;top:174.03px">Magwood</div>
<div class="c" style="left:187.72000000000003px;top:174.03px">Female</div>
<div class="c" style="left:243.98000000000002px;top:174.03px">United States</div>
<div class="c r" style="left:298.44px;width:54.96px;top:174.03px">58</div>
<div class="c" style="left:356.5px;top:174.03px">16/08/2016</div>
<div class="c r" style="left:410.96px;width:54.96px;top:174.03px">2468</div>
<div class="c r" style="left:467.21999999999997px;width:54.96px;top:174.03px">5</div>
<div class="c" style="left:525.28px;top:174.03px">Nereida</div>
<div class="c" style="left:581.54px;top:174.03px">Magwood</div>
<div class="c" style="left:637.8px;top:174.03px">Female</div>
<div class="c" style="left:694.06px;top:174.03px">United States</div>
<div class="c r" style="left:748.52px;width:54.96px;top:174.03px">58</div>
<div class="c" style="left:806.5799999999999px;top:174.03px">16/08/2016</div>
<div class="c r" style="left:17.14px;width:54.96px;top:185.10px">6</div>
<div class="c" style="left:75.2px;top:185.10px">Gaston</div>
<div class="c" style="left:131.46px;top:185.10px">Brumm</div>
<div class="c" style="left:187.72000000000003px;top:185.10px">Male</div>
<div class="c" style="left:243.98000000000002px;top:185.10px">United States</div>
<div class="c r" style="left:298.44px;width:54.96px;top:185.10px">24</div>
<div class="c" style="left:356.5px;top:185.10px">21/05/2015</div>
<div class="c r" style="left:410.96px;width:54.96px;top:185.10px">2554</div>
<div class="c r" style="left:467.21999999999997px;width:54.96px;top:185.10px">6</div>
<div class="c" style="left:525.28px;top:185.10px">Gaston</div>
<div class="c" style="left:581.54px;top:185.10px">Brumm</div>
<div class="c" style="left:637.8px;top:185.10px">Male</div>
<div class="c" style="left:694.06px;top:185.10px">United States</div>
<div class="c r" style="left:748.52px;width:54.96px;top:185.10px">24</div>
<div class="c" style="left:806.5799999999999px;top:185.10px">21/05/2015</div>
<div class="c r" style="left:17.14px;width:54.96px;top:196.17px">7</div>
<div class="c" style="left:75.2px;top:196.17px">Etta</div>
<div class="c" style="left:131.46px;top:196.17px">Hurn</div>
<div class="c" style="left:187.72000000000003px;top:196.17px">Female</div>
<div class="c" style="left:243.98000000000002px;top:196.17px">Great Britain</div>
<div class="c r" style="left:298.44px;width:54.96px;top:196.17px">56</div>
<div class="c" style="left:356.5px;top:196.17px">15/10/2017</div>
<div class="c r" style="left:410.96px;width:54.96px;top:196.17px">3598</div>
<div class="c r" style="left:467.21999999999997px;width:54.96px;top:196.17px">7</div>
<div class="c" style="left:525.28px;top:196.17px">Etta</div>
<div class="c" style="left:581.54px;top:196.17px">Hurn</div>
<div class="c" style="left:637.8px;top:196.17px">Female</div>
<div class="c" style="left:694.06px;top:196.17px">Great Britain</div>
<div class="c r" style="left:748.52px;width:54.96px;top:196.17px">56</div>
<div class="c" style="left:806.5799999999999px;top:196.17px">15/10/2017</div>
<div class="c r" style="left:17.14px;width:54.96px;top:207.24px">8</div>
<div class="c" style="left:75.2px;top:207.24px">Earlean</div>
<div class="c" style="left:131.46px;top:207.24px">Melgar</div>
<div class="c" style="left:187.72000000000003px;top:207.24px">Female</div>
<div class="c" style="left:243.98000000000002px;top:207.24px">United States</div>
<div class="c r" style="left:298.44px;width:54.96px;top:207.24px">27</div>
<div class="c" style="left:356.5px;top:207.24px">16/08/2016</div>
<div class="c r" style="left:410.96px;width:54.96px;top:207.24px">2456</div>
<div class="c r" style="left:467.21999999999997px;width:54.96px;top:207.24px">8</div>
<div class="c" style="left:525.28px;top:207.24px">Earlean</div>
<div class="c" style="left:581.54px;top:207.24px">Melgar</div>
<div class="c" style="left:637.8px;top:207.24px">Female</div>
<div class="c" style="left:694.06px;top:207.24px">United States</div>
<div class="c r" style="left:748.52px;width:54.96px;top:207.24px">27</div>
<div class="c" style="left:806.5799999999999px;top:207.24px">16/08/2016</div>
<div class="c r" style="left:17.14px;width:54.96px;top:218.30px">9</div>
<div class="c" style="left:75.2px;top:218.30px">Vincenza</div>
<div class="c" style="left:131.46px;top:218.30px">Weiland</div>
<div class="c" style="left:187.72000000000003px;top:218.30px">Female</div>
<div class="c" style="left:243.98000000000002px;top:218.30px">United States</div>
<div class="c r" style="left:298.44px;width:54.96px;top:218.30px">40</div>
<div class="c" style="left:356.5px;top:218.30px">21/05/2015</div>
<div class="c r" style="left:410.96px;width:54.96px;top:218.30px">6548</div>
<div class="c r" style="left:467.21999999999997px;width:54.96px;top:218.30px">9</div>
<div class="c" style="left:525.28px;top:218.30px">Vincenza</div>
<div class="c" style="left:581.54px;top:218.30px">Weiland</div>
<div class="c" style="left:637.8px;top:218.30px">Female</div>
<div class="c" style="left:694.06px;top:218.30px">United States</div>
<div class="c r" style="left:748.52px;width:54.96px;top:218.30px">40</div>
<div class="c" style="left:806.5799999999999px;top:218.30px">21/05/2015</div>
<div class="c r" style="left:17.14px;width:54.96px;top:229.37px">10</div>
<div class="c" style="left:75.2px;top:229.37px">Fallon</div>
<div class="c" style="left:131.46px;top:229.37px">Winward</div>
<div class="c" style="left:187.72000000000003px;top:229.37px">Female</div>
<div class="c" style="left:243.98000000000002px;top:229.37px">Great Britain</div>
<div class="c r" style="left:298.44px;width:54.96px;top:229.37px">28</div>
<div class="c" style="left:356.5px;top:229.37px">16/08/2016</div>
<div class="c r" style="left:410.96px;width:54.96px;top:229.37px">5486</div>
<div class="c r" style="left:467.21999999999997px;width:54.96px;top:229.37px">10</div>
<div class="c" style="left:525.28px;top:229.37px">Fallon</div>
<div class="c" style="left:581.54px;top:229.37px">Winward</div>
<div class="c" style="left:637.8px;top:229.37px">Female</div>
<div class="c" style="left:694.06px;top:229.37px">Great Britain</div>
<div class="c r" style="left:748.52px;width:54.96px;top:229.37px">28</div>
<div class="c" style="left:806.5799999999999px;top:229.37px">16/08/2016</div>
<div class="c r" style="left:17.14px;width:54.96px;top:240.44px">11</div>
<div class="c" style="left:75.2px;top:240.44px">Arcelia</div>
<div class="c" style="left:131.46px;top:240.44px">Bouska</div>
<div class="c" style="left:187.72000000000003px;top:240.44px">Female</div>
<div class="c" style="left:243.98000000000002px;top:240.44px">Great Britain</div>
<div class="c r" style="left:298.44px;width:54.96px;top:240.44px">39</div>
<div class="c" style="left:356.5px;top:240.44px">21/05/2015</div>
<div class="c r" style="left:410.96px;width:54.96px;top:240.44px">1258</div>
<div class="c r" style="left:467.21999999999997px;width:54.96px;top:240.44px">11</div>
<div class="c" style="left:525.28px;top:240.44px">Arcelia</div>
<div class="c" style="left:581.54px;top:240.44px">Bouska</div>
<div class="c" style="left:637.8px;top:240.44px">Female</div>
<div class="c" style="left:694.06px;top:240.44px">Great Britain</div>
<div class="c r" style="left:748.52px;width:54.96px;top:240.44px">39</div>
<div class="c" style="left:806.5799999999999px;top:240.44px">21/05/2015</div>
<div class="c r" style="left:17.14px;width:54.96px;top:251.50px">12</div>
<div class="c" style="left:75.2px;top:251.50px">Franklyn</div>
<div class="c" style="left:131.46px;top:251.50px">Unknow</div>
<div class="c" style="left:187.72000000000003px;top:251.50px">Male</div>
<div class="c" style="left:243.98000000000002px;top:251.50px">France</div>
<div class="c r" style="left:298.44px;width:54.96px;top:251.50px">38</div>
<div class="c" style="left:356.5px;top:251.50px">15/10/2017</div>
<div class="c r" style="left:410.96px;width:54.96px;top:251.50px">2579</div>
<div class="c r" style="left:467.21999999999997px;width:54.96px;top:251.50px">12</div>
<div class="c" style="left:525.28px;top:251.50px">Franklyn</div>
<div class="c" style="left:581.54px;top:251.50px">Unknow</div>
<div class="c" style="left:637.8px;top:251.50px">Male</div>
<div class="c" style="left:694.06px;top:251.50px">France</div>
<div class="c r" style="left:748.52px;width:54.96px;top:251.50px">38</div>
<div class="c" style="left:806.5799999999999px;top:251.50px">15/10/2017</div>
<div class="c r" style="left:17.14px;width:54.96px;top:262.57px">13</div>
<div class="c" style="left:75.2px;top:262.57px">Sherron</div>
<div class="c" style="left:131.46px;top:262.57px">Ascencio</div>
<div class="c" style="left:187.72000000000003px;top:262.57px">Female</div>
<div class="c" style="left:243.98000000000002px;top:262.57px">Great Britain</div>
<div class="c r" style="left:298.44px;width:54.96px;top:262.57px">32</div>
<div class="c" style="left:356.5px;top:262.57px">16/08/2016</div>
<div class="c r" style="left:410.96px;width:54.96px;top:262.57px">3256</div>
<div class="c r" style="left:467.21999999999997px;width:54.96px;top:262.57px">13</div>
<div class="c" style="left:525.28px;top:262.57px">Sherron</div>
<div class="c" style="left:581.54px;top:262.57px">Ascencio</div>
<div class="c" style="left:637.8px;top:262.57px">Female</div>
<div class="c" style="left:694.06px;top:262.57px">Great Britain</div>
<div class="c r" style="left:748.52px;width:54.96px;top:262.57px">32</div>
<div class="c" style="left:806.5799999999999px;top:262.57px">16/08/2016</div>
<div class="c r" style="left:17.14px;width:54.96px;top:273.64px">14</div>
<div class="c" style="left:75.2px;top:273.64px">Marcel</div>
<div class="c" style="left:131.46px;top:273.64px">Zabriskie</div>
<div class="c" style="left:187.72000000000003px;top:273.64px">Male</div>
<div class="c" style="left:243.98000000000002px;top:273.64px">Great Britain</div>
<div class="c r" style="left:298.44px;width:54.96px;top:273.64px">26</div>
<div class="c" style="left:356.5px;top:273.64px">21/05/2015</div>
<div class="c r" style="left:410.96px;width:54.96px;top:273.64px">2587</div>
<div class="c r" style="left:467.21999999999997px;width:54.96px;top:273.64px">14</div>
<div class="c" style="left:525.28px;top:273.64px">Marcel</div>
<div class="c" style="left:581.54px;top:273.64px">Zabriskie</div>
<div class="c" style="left:637.8px;top:273.64px">Male</div>
<div class="c" style="left:694.06px;top:273.64px">Great Britain</div>
<div class="c r" style="left:748.52px;width:54.96px;top:273.64px">26</div>
<div class="c" style="left:806.5799999999999px;top:273.64px">21/05/2015</div>
<div class="c r" style="left:17.14px;width:54.96px;top:284.70px">15</div>
<div class="c" style="left:75.2px;top:284.70px">Kina</div>
<div class="c" style="left:131.46px;top:284.70px">Hazelton</div>
<div class="c" style="left:187.72000000000003px;top:284.70px">Female</div>
<div class="c" style="left:243.98000000000002px;top:284.70px">Great Britain</div>
<div class="c r" style="left:298.44px;width:54.96px;top:284.70px">31</div>
<div class="c" style="left:356.5px;top:284.70px">16/08/2016</div>
<div class="c r" style="left:410.96px;width:54.96px;top:284.70px">3259</div>
<div class="c r" style="left:467.21999999999997px;width:54.96px;top:284.70px">15</div>
<div class="c" style="left:525.28px;top:284.70px">Kina</div>
<div class="c" style="left:581.54px;top:284.70px">Hazelton</div>
<div class="c" style="left:637.8px;top:284.70px">Female</div>
<div class="c" style="left:694.06px;top:284.70px">Great Britain</div>
<div class="c r" style="left:748.52px;width:54.96px;top:284.70px">31</div>
<div class="c" style="left:806.5799999999999px;top:284.70px">16/08/2016</div>
<div class="c r" style="left:17.14px;width:54.96px;top:295.77px">16</div>
<div class="c" style="left:75.2px;top:295.77px">Shavonne</div>
<div class="c" style="left:131.46px;top:295.77px">Pia</div>
<div class="c" style="left:187.72000000000003px;top:295.77px">Female</div>
<div class="c" style="left:243.98000000000002px;top:295.77px">France</div>
<div class="c r" style="left:298.44px;width:54.96px;top:295.77px">24</div>
<div class="c" style="left:356.5px;top:295.77px">21/05/2015</div>
<div class="c r" style="left:410.96px;width:54.96px;top:295.77px">1546</div>
<div class="c r" style="left:467.21999999999997px;width:54.96px;top:295.77px">16</div>
<div class="c" style="left:525.28px;top:295.77px">Shavonne</div>
<div class="c" style="left:581.54px;top:295.77px">Pia</div>
<div class="c" style="left:637.8px;top:295.77px">Female</div>
<div class="c" style="left:694.06px;top:295.77px">France</div>
<div class="c r" style="left:748.52px;width:54.96px;top:295.77px">24</div>
<div class="c" style="left:806.5799999999999px;top:295.77px">21/05/2015</div>
<div class="c r" style="left:17.14px;width:54.96px;top:306.84px">17</div>
<div class="c" style="left:75.2px;top:306.84px">Shavon</div>
<div class="c" style="left:131.46px;top:306.84px">Benito</div>
<div class="c" style="left:187.72000000000003px;top:306.84px">Female</div>
<div class="c" style="left:243.98000000000002px;top:306.84px">France</div>
<div class="c r" style="left:298.44px;width:54.96px;top:306.84px">39</div>
<div class="c" style="left:356.5px;top:306.84px">15/10/2017</div>
<div class="c r" style="left:410.96px;width:54.96px;top:306.84px">3579</div>
<div class="c r" style="left:467.21999999999997px;width:54.96px;top:306.84px">17</div>
<div class="c" style="left:525.28px;top:306.84px">Shavon</div>
<div class="c" style="left:581.54px;top:306.84px">Benito</div>
<div class="c" style="left:637.8px;top:306.84px">Female</div>
<div class="c" style="left:694.06px;top:306.84px">France</div>
<div class="c r" style="left:748.52px;width:54.96px;top:306.84px">39</div>
<div class="c" style="left:806.5799999999999px;top:306.84px">15/10/2017</div>
<div class="c r" style="left:17.14px;width:54.96px;top:317.91px">18</div>
<div class="c" style="left:75.2px;top:317.91px">Lauralee</div>
<div class="c" style="left:131.46px;top:317.91px">Perrine</div>
<div class="c" style="left:187.72000000000003px;top:317.91px">Female</div>
<div class="c" style="left:243.98000000000002px;top:317.91px">Great Britain</div>
<div class="c r" style="left:298.44px;width:54.96px;top:317.91px">28</div>
<div class="c" style="left:356.5px;top:317.91px">16/08/2016</div>
<div class="c r" style="left:410.96px;width:54.96px;top:317.91px">6597</div>
<div class="c r" style="left:467.21999999999997px;width:54.96px;top:317.91px">18</div>
<div class="c" style="left:525.28px;top:317.91px">Lauralee</div>
<div class="c" style="left:581.54px;top:317.91px">Perrine</div>
<div class="c" style="left:637.8px;top:317.91px">Female</div>
<div class="c" style="left:694.06px;top:317.91px">Great Britain</div>
<div class="c r" style="left:748.52px;width:54.96px;top:317.91px">28</div>
<div class="c" style="left:806.5799999999999px;top:317.91px">16/08/2016</div>
<div class="c r" style="left:17.14px;width:54.96px;top:328.97px">19</div>
<div class="c" style="left:75.2px;top:328.97px">Loreta</div>
<div class="c" style="left:131.46px;top:328.97px">Curren</div>
<div class="c" style="left:187.72000000000003px;top:328.97px">Female</div>
<div class="c" style="left:243.98000000000002px;top:328.97px">France</div>
<div class="c r" style="left:298.44px;width:54.96px;top:328.97px">26</div>
<div class="c" style="left:356.5px;top:328.97px">21/05/2015</div>
<div class="c r" style="left:410.96px;width:54.96px;top:328.97px">9654</div>
<div class="c r" style="left:467.21999999999997px;width:54.96px;top:328.97px">19</div>
<div class="c" style="left:525.28px;top:328.97px">Loreta</div>
<div class="c" style="left:581.54px;top:328.97px">Curren</div>
<div class="c" style="left:637.8px;top:328.97px">Female</div>
<div class="c" style="left:694.06px;top:328.97px">France</div>
<div class="c r" style="left:748.52px;width:54.96px;top:328.97px">26</div>
<div class="c" style="left:806.5799999999999px;top:328.97px">21/05/2015</div>
<div class="c r" style="left:17.14px;width:54.96px;top:340.04px">20</div>
<div class="c" style="left:75.2px;top:340.04px">Teresa</div>
<div class="c" style="left:131.46px;top:340.04px">Strawn</div>
<div class="c" style="left:187.72000000000003px;top:340.04px">Female</div>
<div class="c" style="left:243.98000000000002px;top:340.04px">France</div>
<div class="c r" style="left:298.44px;width:54.96px;top:340.04px">46</div>
<div class="c" style="left:356.5px;top:340.04px">21/05/2015</div>
<div class="c r" style="left:410.96px;width:54.96px;top:340.04px">3569</div>
<div class="c r" style="left:467.21999999999997px;width:54.96px;top:340.04px">20</div>
<div class="c" style="left:525.28px;top:340.04px">Teresa</div>
<div class="c" style="left:581.54px;top:340.04px">Strawn</div>
<div class="c" style="left:637.8px;top:340.04px">Female</div>
<div class="c" style="left:694.06px;top:340.04px">France</div>
<div class="c r" style="left:748.52px;width:54.96px;top:340.04px">46</div>
<div class="c" style="left:806.5799999999999px;top:340.04px">21/05/2015</div>
<div class="c r" style="left:17.14px;width:54.96px;top:351.11px">21</div>
<div class="c" style="left:75.2px;top:351.11px">Belinda</div>
<div class="c" style="left:131.46px;top:351.11px">Partain</div>
<div class="c" style="left:187.72000000000003px;top:351.11px">Female</div>
<div class="c" style="left:243.98000000000002px;top:351.11px">United States</div>
<div class="c r" style="left:298.44px;width:54.96px;top:351.11px">37</div>
<div class="c" style="left:356.5px;top:351.11px">15/10/2017</div>
<div class="c r" style="left:410.96px;width:54.96px;top:351.11px">2564</div>
<div class="c r" style="left:467.21999999999997px;width:54.96px;top:351.11px">21</div>
<div class="c" style="left:525.28px;top:351.11px">Belinda</div>
<div class="c" style="left:581.54px;top:351.11px">Partain</div>
<div class="c" style="left:637.8px;top:351.11px">Female</div>
<div class="c" style="left:694.06px;top:351.11px">United States</div>
<div class="c r" style="left:748.52px;width:54.96px;top:351.11px">37</div>
<div class="c" style="left:806.5799999999999px;top:351.11px">15/10/2017</div>
<div class="c r" style="left:17.14px;width:54.96px;top:362.17px">22</div>
<div class="c" style="left:75.2px;top:362.17px">Holly</div>
<div class="c" style="left:131.46px;top:362.17px">Eudy</div>
<div class="c" style="left:187.72000000000003px;top:362.17px">Female</div>
<div class="c" style="left:243.98000000000002px;top:362.17px">United States</div>
<div class="c r" style="left:298.44px;width:54.96px;top:362.17px">52</div>
<div class="c" style="left:356.5px;top:362.17px">16/08/2016</div>
<div class="c r" style="left:410.96px;width:54.96px;top:362.17px">8561</div>
<div class="c r" style="left:467.21999999999997px;width:54.96px;top:362.17px">22</div>
<div class="c" style="left:525.28px;top:362.17px">Holly</div>
<div class="c" style="left:581.54px;top:362.17px">Eudy</div>
<div class="c" style="left:637.8px;top:362.17px">Female</div>
<div class="c" style="left:694.06px;top:362.17px">United States</div>
<div class="c r" style="left:748.52px;width:54.96px;top:362.17px">52</div>
<div class="c" style="left:806.5799999999999px;top:362.17px">16/08/2016</div>
<div class="c r" style="left:17.14px;width:54.96px;top:373.24px">23</div>
<div class="c" style="left:75.2px;top:373.24px">Many</div>
<div class="c" style="left:131.46px;top:373.24px">Cuccia</div>
<div class="c" style="left:187.72000000000003px;top:373.24px">Female</div>
<div class="c" style="left:243.98000000000002px;top:373.24px">Great Britain</div>
<div class="c r" style="left:298.44px;width:54.96px;top:373.24px">46</div>
<div class="c" style="left:356.5px;top:373.24px">21/05/2015</div>
<div class="c r" style="left:410.96px;width:54.96px;top:373.24px">5489</div>
<div class="c r" style="left:467.21999999999997px;width:54.96px;top:373.24px">23</div>
<div class="c" style="left:525.28px;top:373.24px">Many</div>
<div class="c" style="left:581.54px;top:373.24px">Cuccia</div>
<div class="c" style="left:637.8px;top:373.24px">Female</div>
<div class="c" style="left:694.06px;top:373.24px">Great Britain</div>
<div class="c r" style="left:748.52px;width:54.96px;top:373.24px">46</div>
<div class="c" style="left:806.5799999999999px;top:373.24px">21/05/2015</div>
<div class="c r" style="left:17.14px;width:54.96px;top:384.31px">24</div>
<div class="c" style="left:75.2px;top:384.31px">Libbie</div>
<div class="c" style="left:131.46px;top:384.31px">Dalby</div>
<div class="c" style="left:187.72000000000003px;top:384.31px">Female</div>
<div class="c" style="left:243.98000000000002px;top:384.31px">France</div>
<div class="c r" style="left:298.44px;width:54.96px;top:384.31px">42</div>
<div class="c" style="left:356.5px;top:384.31px">21/05/2015</div>
<div class="c r" style="left:410.96px;width:54.96px;top:384.31px">5489</div>
<div class="c r" style="left:467.21999999999997px;width:54.96px;top:384.31px">24</div>
<div class="c" style="left:525.28px;top:384.31px">Libbie</div>
<div class="c" style="left:581.54px;top:384.31px">Dalby</div>
<div class="c" style="left:637.8px;top:384.31px">Female</div>
<div class="c" style="left:694.06px;top:384.31px">France</div>
<div class="c r" style="left:748.52px;width:54.96px;top:384.31px">42</div>
<div class="c" style="left:806.5799999999999px;top:384.31px">21/05/2015</div>
<div class="c r" style="left:17.14px;width:54.96px;top:395.38px">25</div>
<div class="c" style="left:75.2px;top:395.38px">Lester</div>
<div class="c" style="left:131.46px;top:395.38px">Prothro</div>
<div class="c r" style="left:298.44px;width:54.96px;top:395.38px">21</div>
<div class="c" style="left:356.5px;top:395.38px">15/10/2017</div>
<div class="c r" style="left:410.96px;width:54.96px;top:395.38px">6574</div>
<div class="c r" style="left:467.21999999999997px;width:54.96px;top:395.38px">25</div>
<div class="c" style="left:525.28px;top:395.38px">Lester</div>
<div class="c" style="left:581.54px;top:395.38px">Prothro</div>
<div class="c" style="left:637.8px;top:395.38px">Male</div>
<div class="c" style="left:694.06px;top:395.38px">France</div>
<div class="c r" style="left:748.52px;width:54.96px;top:395.38px">21</div>
<div class="c" style="left:806.5799999999999px;top:395.38px">15/10/2017</div>
<div class="c r" style="left:17.14px;width:54.96px;top:406.44px">26</div>
<div class="c" style="left:75.2px;top:406.44px">Marvel</div>
<div class="c" style="left:131.46px;top:406.44px">Hail</div>
<div class="c" style="left:187.72000000000003px;top:406.44px">Female</div>
<div class="c" style="left:243.98000000000002px;top:406.44px">Great Britain</div>
<div class="c r" style="left:298.44px;width:54.96px;top:406.44px">28</div>
<div class="c" style="left:356.5px;top:406.44px">16/08/2016</div>
<div class="c r" style="left:410.96px;width:54.96px;top:406.44px">5555</div>
<div class="c r" style="left:467.21999999999997px;width:54.96px;top:406.44px">26</div>
<div class="c" style="left:525.28px;top:406.44px">Marvel</div>
<div class="c" style="left:581.54px;top:406.44px">Hail</div>
<div class="c" style="left:637.8px;top:406.44px">Female</div>
<div class="c" style="left:694.06px;top:406.44px">Great Britain</div>
<div class="c r" style="left:748.52px;width:54.96px;top:406.44px">28</div>
<div class="c" style="left:806.5799999999999px;top:406.44px">16/08/2016</div>
<div class="c r" style="left:17.14px;width:54.96px;top:417.51px">27</div>
<div class="c" style="left:75.2px;top:417.51px">Angelyn</div>
<div class="c" style="left:131.46px;top:417.51px">Vong</div>
<div class="c" style="left:187.72000000000003px;top:417.51px">Female</div>
<div class="c" style="left:243.98000000000002px;top:417.51px">United States</div>
<div class="c r" style="left:298.44px;width:54.96px;top:417.51px">29</div>
<div class="c" style="left:356.5px;top:417.51px">21/05/2015</div>
<div class="c r" style="left:410.96px;width:54.96px;top:417.51px">6125</div>
<div class="a" style="left:410.06px;top:115.9px;width:1.6px;height:304.6px;background:#1a1a1a"></div>
<div class="a" style="left:410.06px;top:115.9px;width:114.11999999999999px;height:1.2px;background:#1a1a1a"></div>
<div class="a" style="left:522.58px;top:115.9px;width:1.6px;height:304.6px;background:#1a1a1a"></div>
<div class="a" style="left:521.88px;top:115.7px;width:3px;height:3px;background:#111;border:0.5px solid #fff"></div>
<div class="a" style="left:837px;top:104.2px;width:13px;height:316.6px;background:linear-gradient(90deg,#dde0e4,#e3e6e9);border-left:1px solid #cfd2d6"></div>
<div class="a" style="left:837.9px;top:105.2px;width:10.3px;height:4.8px;background:#fff;border:1px solid #a9aeb5"></div>
<svg class="a" style="left:839px;top:113.5px" width="9" height="5"><path d="M0.8 4.2L4.5 0.6L8.2 4.2Z" fill="#3a3a3a"/></svg>
<div class="a" style="left:838.2px;top:121.4px;width:9.8px;height:75.8px;background:linear-gradient(90deg,#f6f7f8,#eceef1);border:1px solid #c3c7cc;border-radius:1px"></div>
<div class="a" style="left:841.6px;top:158.2px;width:3px;height:3px;background:#b9bdc3"></div>
<svg class="a" style="left:839px;top:412.6px" width="9" height="5"><path d="M0.8 0.6L4.5 4.2L8.2 0.6Z" fill="#3a3a3a"/></svg>
<div class="a" style="left:0;top:420.8px;width:850px;height:11.4px;background:linear-gradient(#e6e9ec,#dde0e4)"></div>
<div class="a" style="left:0;top:420.8px;width:43.3px;height:10.8px;background:linear-gradient(#eceef1,#e3e6ea)"></div>
<svg class="a" style="left:0;top:421px" width="44" height="11"><path d="M4.6 3.2v4.6" stroke="#4a4a4a" stroke-width="0.9"/><path d="M8 3L5.2 5.5 8 8Z" fill="#4a4a4a"/><path d="M17.9 3L15.1 5.5 17.9 8Z" fill="#4a4a4a"/><path d="M25 3L27.8 5.5 25 8Z" fill="#4a4a4a"/><path d="M38.6 3.2v4.6" stroke="#4a4a4a" stroke-width="0.9"/><path d="M35 3L37.8 5.5 35 8Z" fill="#4a4a4a"/></svg>
<svg class="a" style="left:42px;top:420.8px" width="60" height="12"><path d="M37.3 10.6 L39.6 0 L58 0 L51.5 10.6Z" fill="#e9ebef" stroke="#b4b8be" stroke-width="0.6"/><path d="M1.3 0 L1.3 10.7 L37.3 10.7 L39.6 0Z" fill="#fff" stroke="#a9adb3" stroke-width="0.6"/><rect x="42.8" y="4" width="6.2" height="5" fill="#e4ebf5" stroke="#5a73a0" stroke-width="0.7"/><circle cx="43" cy="3.3" r="1.8" fill="#f5c860" stroke="#d49a30" stroke-width="0.5"/></svg>
<div class="ui" style="left:47.4px;top:423.2px;font-size:8.6px;font-weight:bold;color:#333">Sheet1</div>
<div class="a" style="left:171.8px;top:422px;width:4.5px;height:9px;background:#fff;border:1px solid #9ea3aa"></div>
<svg class="a" style="left:179.5px;top:422.5px" width="7" height="9"><path d="M5.5 1L1.5 4.3 5.5 7.6Z" fill="#333"/></svg>
<div class="a" style="left:188.2px;top:421.5px;width:553px;height:10px;background:linear-gradient(#f3f4f6,#e6e8eb);border:1px solid #c5c8cd;border-radius:1px"></div>
<div class="a" style="left:741.5px;top:421.5px;width:81px;height:10px;background:#dcdfe3"></div>
<svg class="a" style="left:823.5px;top:422.5px" width="7" height="9"><path d="M1.5 1L5.5 4.3 1.5 7.6Z" fill="#333"/></svg>
<div class="a" style="left:832px;top:422px;width:4.8px;height:9px;background:#fff;border:1px solid #9ea3aa"></div>
<div class="a" style="left:0;top:431.6px;width:850px;height:15.4px;background:linear-gradient(#e1e4e8,#d3d7dc);border-top:1px solid #a9adb3"></div>
<div class="a" style="left:0;top:432.6px;width:850px;height:1px;background:#f0f2f4"></div>
<div class="ui u2" style="left:3.9px;top:435.8px;color:#555">Ready</div>
<div class="ui u2" style="left:29.6px;top:435.8px;color:#555">Calculate</div>
<div class="a" style="left:62.3px;top:433.5px;width:1px;height:13.5px;background:#c3c6cb"></div>
<div class="ui u2" style="left:531.8px;top:435.8px;color:#555">Average: 3747.007937</div>
<div class="ui u2" style="left:608.2px;top:435.8px;color:#555">Count: 127</div>
<div class="ui u2" style="left:649px;top:435.8px;color:#555">Sum: 472123</div>
<div class="a" style="left:697.5px;top:433.5px;width:12px;height:12px;background:linear-gradient(#fde9a6,#f7d36a);border:1px solid #e3b54a"></div>
<svg class="a" style="left:699px;top:435.5px" width="9" height="8"><path d="M0.5 0.5h8v7h-8z M0.5 3h8 M0.5 5.3h8 M3 0.5v7 M5.8 0.5v7" stroke="#666" stroke-width="0.6" fill="#fff"/></svg>
<svg class="a" style="left:711.5px;top:435px" width="11" height="10"><rect x="0.5" y="0.5" width="9.2" height="8.6" fill="#a9adb3" stroke="#8a8e94" stroke-width="0.7"/><rect x="2.4" y="2.4" width="5.4" height="4.8" fill="#e8eaed"/><rect x="3.6" y="3.6" width="3" height="2.4" fill="#b9bcc1"/></svg>
<svg class="a" style="left:723.5px;top:435px" width="11" height="10"><rect x="0.5" y="0.5" width="9.2" height="8.6" fill="#a9adb3" stroke="#8a8e94" stroke-width="0.7"/><rect x="1.8" y="1.8" width="6.6" height="6" fill="#eceef0"/><path d="M4.2 1.8v3.2h2.2V1.8" stroke="#666" stroke-width="0.8" fill="#8a8e94"/></svg>
<div class="ui u2" style="left:740.6px;top:435.8px;color:#555">100%</div>
<svg class="a" style="left:760px;top:433.5px" width="90" height="13"><circle cx="6.2" cy="6.2" r="4.8" fill="#f4f5f7" stroke="#9096a0" stroke-width="0.8"/><path d="M3.8 6.2h4.8" stroke="#555" stroke-width="1.1"/><path d="M12 6.5h70" stroke="#a8acb2" stroke-width="0.8"/><path d="M42 2.5h5v6l-2.5 2.5-2.5-2.5z" fill="#fbfbfc" stroke="#7d838c" stroke-width="0.7"/><circle cx="82" cy="6.2" r="4.8" fill="#f4f5f7" stroke="#9096a0" stroke-width="0.8"/><path d="M79.6 6.2h4.8M82 3.8v4.8" stroke="#555" stroke-width="1.1"/></svg>
<div class="a" style="left:307.3px;top:170.5px;width:146px;height:31.2px;background:#fff;border:1px solid #cfd2d6;box-shadow:1px 1px 1.5px rgba(0,0,0,0.15)"></div>
<svg class="a" style="left:300px;top:165px" width="160" height="40" viewBox="300 165 160 40"><rect x="308.8" y="171.9" width="34.6" height="13.3" fill="#fff" stroke="#e3e5e8" stroke-width="0.8"/><rect x="343.6" y="171.9" width="22.8" height="13.3" fill="#fff" stroke="#e3e5e8" stroke-width="0.8"/><path d="M339.3 178.3h2.6l-1.3 1.4z" fill="#555"/><path d="M361.4 178.3h2.6l-1.3 1.4z" fill="#555"/><text x="310" y="181" font-size="6.6" fill="#555" font-family="Liberation Sans">Arial</text><text x="345.6" y="181" font-size="6.6" fill="#555" font-family="Liberation Sans">10</text><text x="368" y="182.6" font-size="8.6" font-weight="bold" fill="#2a2a2a" font-family="Liberation Serif">A</text><path d="M375.2 175.9l1 -0.9 1 0.9" stroke="#333" stroke-width="0.7" fill="none"/><text x="382" y="182.6" font-size="6.8" font-weight="bold" fill="#2a2a2a" font-family="Liberation Serif">A</text><path d="M387.8 174.8l0.9 0.9 0.9 -0.9" stroke="#333" stroke-width="0.7" fill="none"/><text x="396.6" y="182.4" font-size="9" font-weight="bold" fill="#2a2a2a" font-family="Liberation Sans">$</text><path d="M408 178.6h2.6l-1.3 1.4z" fill="#555"/><text x="414.8" y="182.4" font-size="8.4" fill="#333" stroke="#333" stroke-width="0.2" font-family="Liberation Sans">%</text><text x="431" y="179.6" font-size="10" font-weight="bold" fill="#222" font-family="Liberation Sans">,</text><rect x="440.6" y="174.4" width="10" height="8" fill="#eef1f5" stroke="#8a96a6" stroke-width="0.6"/><path d="M440.6 176.5h10M440.6 180.4h10" stroke="#b0b8c4" stroke-width="0.5"/><text x="443.6" y="180.6" font-size="5" fill="#222" font-family="Liberation Sans">a</text><path d="M441.4 178.6h1.6M447.6 178.6h1.6" stroke="#333" stroke-width="0.6"/><path d="M441.2 178.6l1 -0.8v1.6zM449.4 178.6l-1 -0.8v1.6z" fill="#333"/><rect x="308.8" y="187.4" width="12.8" height="13.1" rx="1" fill="#fbe29a" stroke="#e8c060" stroke-width="0.7"/><text x="311.2" y="197.8" font-size="9.2" font-weight="bold" fill="#1e1e1e" font-family="Liberation Serif">B</text><text x="325.8" y="197.9" font-size="9.4" font-weight="bold" font-style="italic" fill="#222" font-family="Liberation Serif">I</text><path d="M336.5 191.6h9.6M337.5 193.5h7.6M336.5 195.4h9.6M337.5 197.3h7.6" stroke="#777" stroke-width="1.1"/><path d="M351.2 194.6l3.6-3.4 3.6 3.4-3.6 3.3z" fill="#e4ebf2" stroke="#5d6b7a" stroke-width="0.7"/><path d="M354.5 190.2v2.5" stroke="#5d6b7a" stroke-width="0.7"/><path d="M358.6 195l0.8 1.8" stroke="#3a6fc0" stroke-width="1"/><rect x="350.4" y="198" width="9.5" height="1.8" fill="#f5f000"/><path d="M363.2 194.3h2.6l-1.3 1.4z" fill="#555"/><text x="371.4" y="196.6" font-size="8" fill="#2a3350" font-family="Liberation Sans">A</text><rect x="368.9" y="197.6" width="11.2" height="2.2" fill="#e00000"/><path d="M382.3 194.3h2.6l-1.3 1.4z" fill="#555"/><rect x="390.6" y="191.2" width="8.4" height="8.4" fill="#fff" stroke="#a0a4aa" stroke-width="0.5"/><path d="M394.8 191.2v8.4M390.6 195.4h8.4" stroke="#c8ccd2" stroke-width="0.5"/><path d="M390.6 199.5h8.4" stroke="#555" stroke-width="0.8"/><path d="M402.4 194.3h2.6l-1.3 1.4z" fill="#555"/><text x="409.4" y="198.6" font-size="5.2" fill="#333" font-family="Liberation Sans">.00</text><text x="413.6" y="194.4" font-size="5" fill="#333" font-family="Liberation Sans">0</text><path d="M409.6 192.6h2.6M409.6 192.6l1 -0.8M409.6 192.6l1 0.8" stroke="#3a6fc0" stroke-width="0.6"/><text x="422.8" y="198.6" font-size="5.2" fill="#333" font-family="Liberation Sans">.00</text><text x="426.5" y="194.4" font-size="5" fill="#333" font-family="Liberation Sans">.0</text><path d="M423 192.6h2.6M425.6 192.6l-1 -0.8M425.6 192.6l-1 0.8" stroke="#3a6fc0" stroke-width="0.6"/><path d="M436 197.5l3 -3.5 3 2.5-2.5 2.5z" fill="#e8d070" stroke="#8a7a30" stroke-width="0.5"/><path d="M440.5 194.5l3.5 -4" stroke="#555" stroke-width="1.2"/></svg>
<div class="a" style="left:369.2px;top:212px;width:84.5px;height:178.5px;background:#fff;border:1px solid #c9ccd1;box-shadow:-0.5px 0 0.8px rgba(0,0,0,0.08),1.5px 1.5px 2px rgba(0,0,0,0.2)"></div>
<div class="a" style="left:370.5px;top:213px;width:14px;height:176.5px;background:#fefefe;border-right:1px solid #f3f4f5"></div>
<div class="a" style="left:385px;top:244px;width:67.5px;height:9px;background:#f8f9fa"></div>
<div class="a" style="left:363.9px;top:224.2px;width:90.8px;height:20.2px;border:3.6px solid #e21a22"></div>
<div class="a" style="left:367.5px;top:227.8px;width:83.6px;height:13px;background:linear-gradient(#fdeaa8,#f9d984)"></div>
<div class="ui u2" style="left:389px;top:217.2px;color:#444">C<u>u</u>t</div>
<div class="ui u2" style="left:389px;top:231.29999999999998px;color:#444"><u>C</u>opy</div>
<div class="ui u2" style="left:389px;top:245.6px;font-weight:bold;color:#333">Paste Options:</div>
<div class="ui u2" style="left:389px;top:275.70000000000005px;color:#444">Paste <u>S</u>pecial...</div>
<div class="ui u2" style="left:389px;top:292.1px;color:#444"><u>I</u>nsert</div>
<div class="ui u2" style="left:389px;top:306.70000000000005px;color:#444"><u>D</u>elete</div>
<div class="ui u2" style="left:389px;top:320.8px;color:#444">Clear Co<u>n</u>tents</div>
<div class="ui u2" style="left:389px;top:337.90000000000003px;color:#444"><u>F</u>ormat Cells...</div>
<div class="ui u2" style="left:389px;top:351.6px;color:#444">C<u>o</u>lumn Width...</div>
<div class="ui u2" style="left:389px;top:365.70000000000005px;color:#444"><u>H</u>ide</div>
<div class="ui u2" style="left:389px;top:379.8px;color:#444"><u>U</u>nhide</div>
<div class="a" style="left:388px;top:286.1px;width:64px;height:1px;background:#e9ebed"></div>
<div class="a" style="left:388px;top:331.5px;width:64px;height:1px;background:#e9ebed"></div>
<svg class="a" style="left:366px;top:210px" width="40" height="140" viewBox="366 210 40 140"><path d="M374.6 216.2 L378.2 222 M379.6 216.2 L376 222" stroke="#6b6f78" stroke-width="0.9"/><path d="M374 221.8 q1.2 -0.6 2.2 0.3 q-0.3 1.8 -2.2 2 z M380.2 221.8 q-1.2 -0.6 -2.2 0.3 q0.3 1.8 2.2 2 z" fill="#3f5aa6"/><path d="M372.3 230.2h5.8v5.4h-5.8z" fill="#c9d6ea" stroke="#6d80a6" stroke-width="0.7"/><path d="M375.6 232.8h6v5.6h-6z" fill="#b8c9e4" stroke="#5a6f98" stroke-width="0.7"/><path d="M373.4 245.6h7.8v7.6h-7.8z" fill="#f6efdf" stroke="#cdb890" stroke-width="0.7"/><path d="M375.6 247.6h4v4h-4z" fill="#fff" stroke="#c9c9c9" stroke-width="0.5"/><path d="M372.5 338.5h8v8h-8z" fill="#dde6f2" stroke="#6a7fa6" stroke-width="0.7"/><path d="M372.5 340.8h8M375.2 338.5v8" stroke="#8fa2c2" stroke-width="0.5"/><path d="M376.5 337.2 q2.5 -2.2 6 -0.8 l-1 2.4 q-2.6 -0.8 -4.3 0.4z" fill="#f1c04a" stroke="#a27b22" stroke-width="0.5"/></svg>
<svg class="a" style="left:386px;top:253px" width="18" height="18" viewBox="386 253 18 18"><path d="M389 256.2h8.6v12.4H389z" fill="#efd38f" stroke="#b99445" stroke-width="0.7"/><path d="M391.2 255.2h4.2v2.2h-4.2z" fill="#d8d8d8" stroke="#8a8a8a" stroke-width="0.5"/><path d="M393.2 261h4.6l2.6 2.6v5.8h-7.2z" fill="#ffffff" stroke="#9a9a9a" stroke-width="0.6"/></svg>
</body></html>
